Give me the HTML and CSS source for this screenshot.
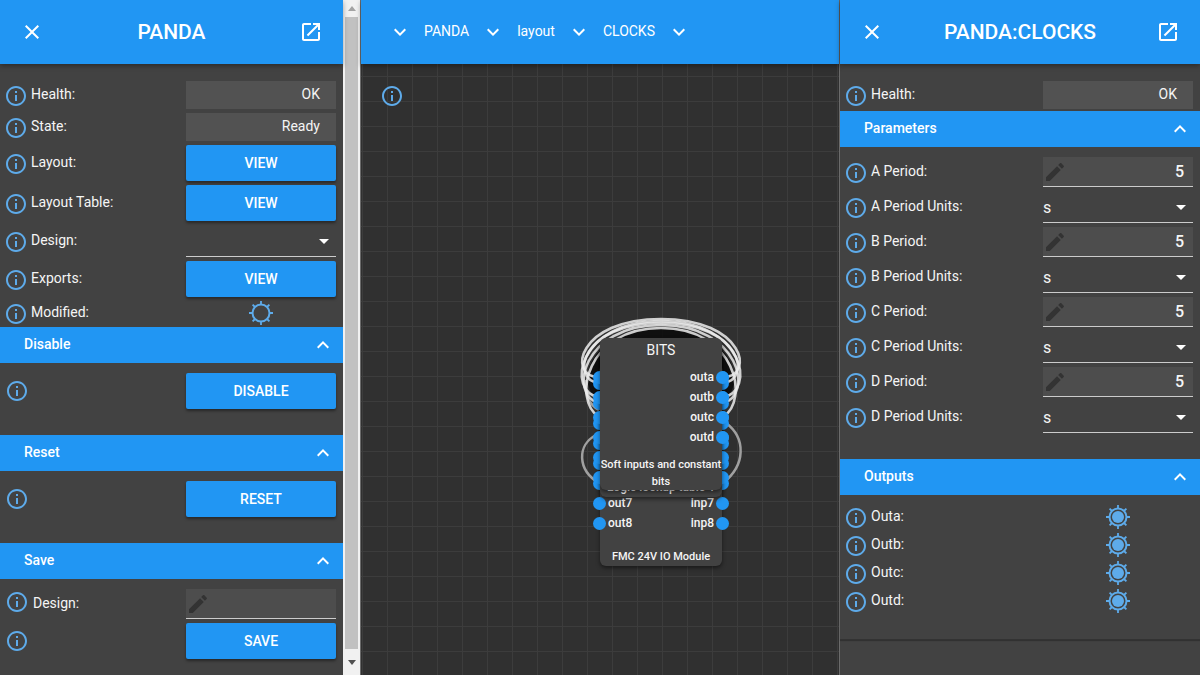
FILE: index.html
```html
<!DOCTYPE html>
<html lang="en">
<head>
<meta charset="utf-8">
<title>PANDA:CLOCKS</title>
<link rel="stylesheet" href="styles.css">
</head>
<body>
<svg class="defs" width="0" height="0" aria-hidden="true">
  <symbol id="i-info" viewBox="0 0 24 24"><path d="M11 7h2v2h-2zm0 4h2v6h-2zm1-9C6.48 2 2 6.48 2 12s4.48 10 10 10 10-4.48 10-10S17.52 2 12 2zm0 18c-4.41 0-8-3.59-8-8s3.59-8 8-8 8 3.59 8 8-3.59 8-8 8z"/></symbol>
  <symbol id="i-close" viewBox="0 0 24 24"><path d="M19 6.41 17.59 5 12 10.59 6.41 5 5 6.41 10.59 12 5 17.59 6.41 19 12 13.41 17.59 19 19 17.59 13.41 12z"/></symbol>
  <symbol id="i-open" viewBox="0 0 24 24"><path d="M19 19H5V5h7V3H5c-1.11 0-2 .9-2 2v14c0 1.1.89 2 2 2h14c1.1 0 2-.9 2-2v-7h-2v7zM14 3v2h3.59l-9.83 9.83 1.41 1.41L19 6.41V10h2V3h-7z"/></symbol>
  <symbol id="i-less" viewBox="0 0 24 24"><path d="M12 8l-6 6 1.41 1.41L12 10.83l4.59 4.58L18 14z"/></symbol>
  <symbol id="i-more" viewBox="0 0 24 24"><path d="M16.59 8.59 12 13.17 7.41 8.59 6 10l6 6 6-6z"/></symbol>
  <symbol id="i-drop" viewBox="0 0 24 24"><path d="M7 10l5 5 5-5z"/></symbol>
  <symbol id="i-edit" viewBox="0 0 24 24"><path d="M3 17.25V21h3.75L17.81 9.94l-3.75-3.75L3 17.25zM20.71 7.04c.39-.39.39-1.02 0-1.41l-2.34-2.34c-.39-.39-1.02-.39-1.41 0l-1.83 1.83 3.75 3.75 1.83-1.83z"/></symbol>
  <symbol id="i-led" viewBox="0 0 24 24">
    <circle cx="12" cy="12" r="8.500" fill="none" stroke="currentColor" stroke-width="2"/>
    <path d="M12 0v4M12 20v4M0 12h4M20 12h4M3.600 3.600l2.400 2.400M18 18l2.400 2.400M3.600 20.400L6 18M18 6l2.400-2.400" fill="none" stroke="currentColor" stroke-width="1.800"/>
  </symbol>
  <symbol id="i-led-on" viewBox="0 0 24 24">
    <circle cx="12" cy="12" r="8.500" fill="none" stroke="currentColor" stroke-width="2"/>
    <circle cx="12" cy="12" r="6" fill="currentColor"/>
    <path d="M12 0v4M12 20v4M0 12h4M20 12h4M3.600 3.600l2.400 2.400M18 18l2.400 2.400M3.600 20.400L6 18M18 6l2.400-2.400" fill="none" stroke="currentColor" stroke-width="1.800"/>
  </symbol>
</svg>

<div class="app">
  <div class="side side-left">
    <div class="side-scroll">
      <header class="bar">
        <svg class="ico white"><use href="#i-close"/></svg>
        <h1 class="bar-title">PANDA</h1>
        <svg class="ico white"><use href="#i-open"/></svg>
      </header>
      <div class="rows first">
        <div class="row h28"><svg class="ico info"><use href="#i-info"/></svg><span class="label">Health:</span><div class="ctl field">OK</div></div>
        <div class="row h28"><svg class="ico info"><use href="#i-info"/></svg><span class="label">State:</span><div class="ctl field">Ready</div></div>
        <div class="row h36"><svg class="ico info"><use href="#i-info"/></svg><span class="label">Layout:</span><button class="ctl btn">VIEW</button></div>
        <div class="row h36"><svg class="ico info"><use href="#i-info"/></svg><span class="label">Layout Table:</span><button class="ctl btn">VIEW</button></div>
        <div class="row h32"><svg class="ico info"><use href="#i-info"/></svg><span class="label">Design:</span><div class="ctl select"><span></span><svg class="ico white"><use href="#i-drop"/></svg></div></div>
        <div class="row h36"><svg class="ico info"><use href="#i-info"/></svg><span class="label">Exports:</span><button class="ctl btn">VIEW</button></div>
        <div class="row h24 flat"><svg class="ico info"><use href="#i-info"/></svg><span class="label">Modified:</span><div class="ctl led"><svg class="ico info"><use href="#i-led"/></svg></div></div>
      </div>
      <div class="sec-head tight"><span>Disable</span><svg class="ico white"><use href="#i-less"/></svg></div>
      <div class="sec-body action"><div class="row h36 flat inset"><svg class="ico info"><use href="#i-info"/></svg><button class="ctl btn">DISABLE</button></div></div>
      <div class="sec-head"><span>Reset</span><svg class="ico white"><use href="#i-less"/></svg></div>
      <div class="sec-body action"><div class="row h36 flat inset"><svg class="ico info"><use href="#i-info"/></svg><button class="ctl btn">RESET</button></div></div>
      <div class="sec-head"><span>Save</span><svg class="ico white"><use href="#i-less"/></svg></div>
      <div class="sec-body">
        <div class="row h30 flat inset"><svg class="ico info"><use href="#i-info"/></svg><span class="label">Design:</span><div class="ctl input"><svg class="ico pencil"><use href="#i-edit"/></svg></div></div>
        <div class="row h36 flat inset"><svg class="ico info"><use href="#i-info"/></svg><button class="ctl btn">SAVE</button></div>
      </div>
    </div>
    <div class="scrollbar">
      <div class="sb-arrow up"></div>
      <div class="sb-thumb"></div>
      <div class="sb-arrow down"></div>
    </div>
  </div>

  <main class="centre">
    <header class="bar crumbs">
      <svg class="ico white"><use href="#i-more"/></svg><span>PANDA</span>
      <svg class="ico white"><use href="#i-more"/></svg><span>layout</span>
      <svg class="ico white"><use href="#i-more"/></svg><span>CLOCKS</span>
      <svg class="ico white"><use href="#i-more"/></svg>
    </header>
    <div class="canvas">
      <svg class="ico info canvas-info"><use href="#i-info"/></svg>
      <svg class="wires" viewBox="561 304 200 300" width="200" height="300">
        <g class="wire-shade">
          <path d="M722 395C742 378 722 333 661 333S580 378 600 395"/>
        </g>
        <g class="wire-soft">
          <path d="M726 423C746 438 746 465 723 483"/>
          <path d="M596 435C577 445 577 470 599 483"/>
          <path d="M599 410C588 404 584 392 586 380"/>
        </g>
        <g class="wire">
          <path d="M723 377C755 377 745 319 661 319S567 377 599 377"/>
          <path d="M723 397C756 392 745 321 661 321S566 392 599 397"/>
          <path d="M723 383C752 380 742 323 661 323S570 380 599 383"/>
          <path d="M723 403C754 395 740 325 661 325S568 395 599 403"/>
          <path d="M723 417C750 400 736 328 661 328S572 400 599 417"/>
        </g>
      </svg>

      <div class="node node-fmc">
        <div class="ports">
          <div class="port"><i class="dot l"></i><i class="dot r"></i></div>
          <div class="port"><i class="dot l"></i><i class="dot r"></i></div>
          <div class="port"><i class="dot l"></i><i class="dot r"></i></div>
          <div class="port"><i class="dot l"></i><i class="dot r"></i></div>
          <div class="port"><i class="dot l"></i><i class="dot r"></i></div>
          <div class="port"><i class="dot l"></i><i class="dot r"></i></div>
          <div class="port"><i class="dot l"></i><span>out7</span><span>inp7</span><i class="dot r"></i></div>
          <div class="port"><i class="dot l"></i><span>out8</span><span>inp8</span><i class="dot r"></i></div>
        </div>
        <div class="node-desc">FMC 24V IO Module</div>
      </div>

      <div class="node node-lut">
        <div class="ports">
          <div class="port"><i class="dot l"></i><i class="dot r"></i></div>
          <div class="port"><i class="dot l"></i><i class="dot r"></i></div>
          <div class="port"><i class="dot l"></i><i class="dot r"></i></div>
          <div class="port"><i class="dot l"></i><i class="dot r"></i></div>
          <div class="port"><i class="dot l"></i><i class="dot r"></i></div>
          <div class="port"><i class="dot l"></i><i class="dot r"></i></div>
        </div>
        <div class="node-desc lut-desc">Logic lookup table 1</div>
      </div>

      <div class="node node-bits">
        <div class="node-title">BITS</div>
        <div class="ports">
          <div class="port"><span></span><span>outa</span><i class="dot r"></i></div>
          <div class="port"><span></span><span>outb</span><i class="dot r"></i></div>
          <div class="port"><span></span><span>outc</span><i class="dot r"></i></div>
          <div class="port"><span></span><span>outd</span><i class="dot r"></i></div>
        </div>
        <div class="node-desc bits-desc">Soft inputs and constant bits</div>
      </div>
    </div>
  </main>

  <aside class="side side-right">
    <header class="bar">
      <svg class="ico white"><use href="#i-close"/></svg>
      <h1 class="bar-title">PANDA:CLOCKS</h1>
      <svg class="ico white"><use href="#i-open"/></svg>
    </header>
    <div class="rows first short">
      <div class="row h28"><svg class="ico info"><use href="#i-info"/></svg><span class="label">Health:</span><div class="ctl field">OK</div></div>
    </div>
    <div class="sec-head tight"><span>Parameters</span><svg class="ico white"><use href="#i-less"/></svg></div>
    <div class="sec-body params">
      <div class="row h30"><svg class="ico info"><use href="#i-info"/></svg><span class="label">A Period:</span><div class="ctl input"><svg class="ico pencil"><use href="#i-edit"/></svg><span class="num">5</span></div></div>
      <div class="row h32"><svg class="ico info"><use href="#i-info"/></svg><span class="label">A Period Units:</span><div class="ctl select"><span>s</span><svg class="ico white"><use href="#i-drop"/></svg></div></div>
      <div class="row h30"><svg class="ico info"><use href="#i-info"/></svg><span class="label">B Period:</span><div class="ctl input"><svg class="ico pencil"><use href="#i-edit"/></svg><span class="num">5</span></div></div>
      <div class="row h32"><svg class="ico info"><use href="#i-info"/></svg><span class="label">B Period Units:</span><div class="ctl select"><span>s</span><svg class="ico white"><use href="#i-drop"/></svg></div></div>
      <div class="row h30"><svg class="ico info"><use href="#i-info"/></svg><span class="label">C Period:</span><div class="ctl input"><svg class="ico pencil"><use href="#i-edit"/></svg><span class="num">5</span></div></div>
      <div class="row h32"><svg class="ico info"><use href="#i-info"/></svg><span class="label">C Period Units:</span><div class="ctl select"><span>s</span><svg class="ico white"><use href="#i-drop"/></svg></div></div>
      <div class="row h30"><svg class="ico info"><use href="#i-info"/></svg><span class="label">D Period:</span><div class="ctl input"><svg class="ico pencil"><use href="#i-edit"/></svg><span class="num">5</span></div></div>
      <div class="row h32"><svg class="ico info"><use href="#i-info"/></svg><span class="label">D Period Units:</span><div class="ctl select"><span>s</span><svg class="ico white"><use href="#i-drop"/></svg></div></div>
    </div>
    <div class="sec-head"><span>Outputs</span><svg class="ico white"><use href="#i-less"/></svg></div>
    <div class="sec-body outputs">
      <div class="row h28 flat"><svg class="ico info"><use href="#i-info"/></svg><span class="label">Outa:</span><div class="ctl led"><svg class="ico info"><use href="#i-led-on"/></svg></div></div>
      <div class="row h28 flat"><svg class="ico info"><use href="#i-info"/></svg><span class="label">Outb:</span><div class="ctl led"><svg class="ico info"><use href="#i-led-on"/></svg></div></div>
      <div class="row h28 flat"><svg class="ico info"><use href="#i-info"/></svg><span class="label">Outc:</span><div class="ctl led"><svg class="ico info"><use href="#i-led-on"/></svg></div></div>
      <div class="row h28 flat"><svg class="ico info"><use href="#i-info"/></svg><span class="label">Outd:</span><div class="ctl led"><svg class="ico info"><use href="#i-led-on"/></svg></div></div>
    </div>
  </aside>
</div>
</body>
</html>
```

FILE: styles.css
```css
* { box-sizing: border-box; }
html, body { margin: 0; height: 100%; overflow: hidden; }
body { font-family: Roboto, "Liberation Sans", sans-serif; font-size: 14px; color: #f5f5f5; background: #424242; }
.defs { position: absolute; }

.app { display: flex; height: 675px; }

.ico { width: 24px; height: 24px; flex: none; display: block; fill: currentColor; }
.white { color: #fff; }
.info { color: #5eabea; }
.pencil { color: #333; }

.side { background: #424242; display: flex; flex: none; }
.side-left { width: 360px; }
.side-scroll { width: 343px; flex: none; }
.side-right { width: 361px; flex-direction: column; border-left: 1px solid #6b6b6b; }

.bar { height: 64px; flex: none; background: #2196f3; color: #fff; display: flex; align-items: center; padding: 0 20px; justify-content: space-between; position: relative; z-index: 2; box-shadow: 0 2px 5px rgba(0,0,0,.35); }
.bar-title { margin: 0; font-size: 21px; font-weight: 500; line-height: 24px; }

.rows.first { padding-top: 17px; }
.rows.short .row { margin-bottom: 0; }

.row { display: flex; align-items: center; margin-bottom: 4px; padding-right: 7px; padding-left: 4px; }
.row > .ico { margin-top: 2px; }
.row.flat { margin-bottom: 0; }
.row.inset { padding-left: 5px; }
.row.inset > .ico { margin-top: 0; }
.row.inset.h30 > .ico { margin-bottom: 4px; }
.h24 { height: 24px; }
.h28 { height: 28px; }
.h30 { height: 30px; }
.h32 { height: 32px; }
.h36 { height: 36px; }

.label { margin-left: 3px; margin-bottom: 2px; font-size: 14px; line-height: 20px; white-space: nowrap; color: #f5f5f5; }
.inset .label { margin-left: 4px; }

.ctl { margin-left: auto; width: 150px; height: 100%; flex: none; }
.field { background: #525252; text-align: right; padding-right: 16px; line-height: 26px; font-size: 14px; color: #f5f5f5; }
.btn { display: block; border: 0; border-radius: 2px; background: #2196f3; color: #fff; font: 500 14px/36px Roboto, sans-serif; padding: 0; text-align: center; box-shadow: 0 2px 3px rgba(0,0,0,.4); }
.select { display: flex; align-items: center; justify-content: space-between; border-bottom: 1px solid #ccc; font-size: 16px; color: #f5f5f5; padding-top: 2px; }
.select .ico { margin-bottom: 2px; }
.input { display: flex; align-items: center; justify-content: space-between; background: #4d4d4d; border-bottom: 1px solid #ccc; padding-right: 9px; }
.num { font-size: 16px; font-weight: 500; color: #f5f5f5; }
.led { display: flex; justify-content: center; align-items: center; }

.sec-head { height: 36px; background: #2196f3; color: #fff; display: flex; align-items: center; justify-content: space-between; padding: 0 8px 0 24px; font-size: 14px; font-weight: 500; flex: none; }
.sec-head span { margin-bottom: 2px; }
.sec-head.tight { margin-top: 2px; }
.sec-body { padding-top: 10px; }
.sec-body .row.h30 { margin-bottom: 4px; }
.sec-body.action { height: 72px; }
.sec-body.params { height: 312px; }
.sec-body.outputs { padding-top: 8px; height: 145px; border-bottom: 1px solid #333; box-shadow: 0 1px 1px rgba(0,0,0,.25); }

.scrollbar { width: 17px; flex: none; background: #f1f1f1; display: flex; flex-direction: column; padding: 0 2px; }
.sb-arrow { height: 17px; flex: none; display: flex; justify-content: center; align-items: center; }
.sb-arrow::after { content: ""; border-left: 4px solid transparent; border-right: 4px solid transparent; }
.sb-arrow.up::after { border-bottom: 5px solid #a3a3a3; }
.sb-arrow.down { height: 26px; }
.sb-arrow.down::after { border-top: 5px solid #505050; }
.sb-thumb { width: 13px; height: 632px; background: #c1c1c1; }

.centre { flex: 1; display: flex; flex-direction: column; min-width: 0; border-left: 1px solid #6b6b6b; }
.crumbs { justify-content: flex-start; padding: 0 0 0 27px; gap: 12px; font-size: 14px; }
.crumbs span { margin-bottom: 2px; }
.canvas { flex: 1; position: relative; background-color: #303030; background-image: linear-gradient(#3c3c3c 1px, transparent 1px), linear-gradient(90deg, #3c3c3c 1px, transparent 1px); background-size: 25px 25px; background-position: 0 12px, 1px 0; overflow: hidden; }
.canvas-info { position: absolute; left: 19px; top: 20px; }

.wires { position: absolute; left: 200px; top: 240px; }
.wires path { fill: none; }
.wire path { stroke: #ececec; stroke-width: 2.600; stroke-opacity: .85; }
.wire-soft path { stroke: #a0a0a0; stroke-width: 2.500; }
.wire-shade path { stroke: #0c0c0c; stroke-width: 10; stroke-opacity: .9; }

.node { position: absolute; left: 239px; width: 122px; background: #424242; border-radius: 6px; box-shadow: 0 2px 4px rgba(0,0,0,.5); display: flex; flex-direction: column; color: #f5f5f5; font-size: 12px; }
.node-fmc { top: 280px; height: 222px; padding-top: 29px; }
.node-lut { top: 286px; height: 147px; padding-top: 17px; }
.node-bits { top: 274px; height: 152px; }
.node-title { height: 24px; line-height: 24px; text-align: center; font-size: 14px; margin-bottom: 5px; }
.ports { display: flex; flex-direction: column; }
.port { height: 20px; display: flex; align-items: center; justify-content: space-between; padding: 0 8px; position: relative; font-weight: 500; }
.dot { position: absolute; width: 13px; height: 13px; border-radius: 50%; background: #2196f3; }
.dot.l { left: -7px; }
.dot.r { right: -7px; }
.node-desc { font-size: 11px; text-align: center; font-weight: 500; line-height: 17px; margin-top: auto; }
.node-fmc .node-desc { margin-bottom: 1px; }
.lut-desc { font-size: 12px; margin-top: -8px; }
.bits-desc { margin-top: 9px; margin-bottom: 0; }
```
